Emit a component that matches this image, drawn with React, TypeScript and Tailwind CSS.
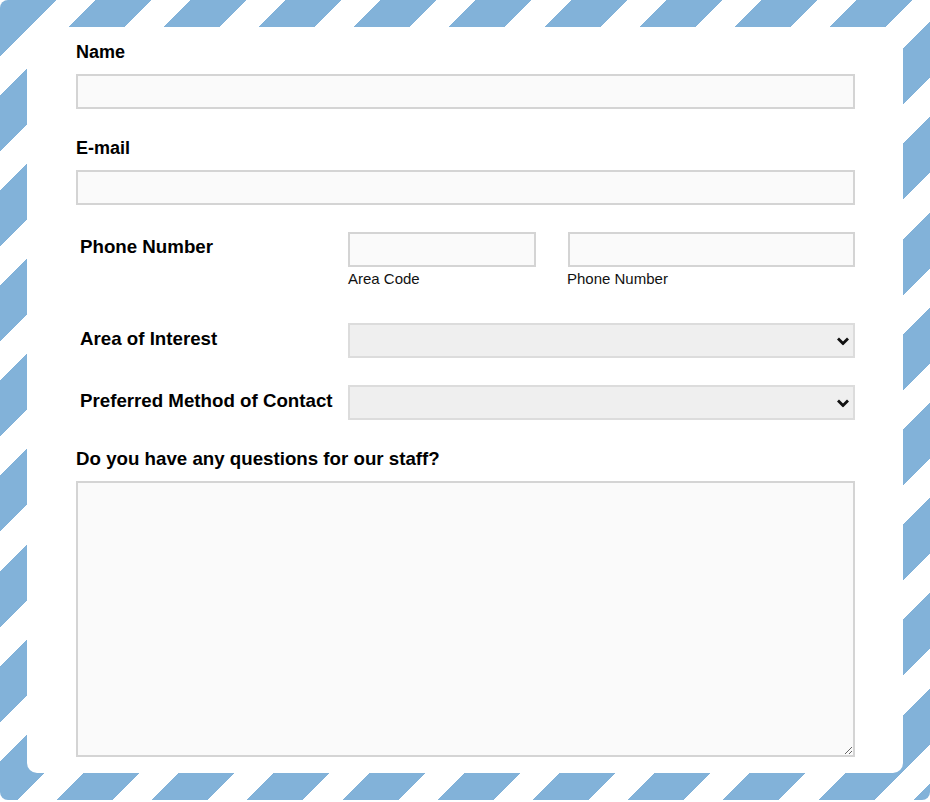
import React from "react";

function Chevron() {
  return (
    <svg
      className="pointer-events-none absolute right-[5px] top-1/2 -translate-y-1/2"
      width="14"
      height="9"
      viewBox="0 0 14 9"
      fill="none"
    >
      <path d="M2 2 L7 7 L12 2" stroke="#111" strokeWidth="2.8" strokeLinecap="butt" strokeLinejoin="miter" />
    </svg>
  );
}

function Select() {
  return (
    <div className="relative flex-1">
      <select className="block h-[35px] w-full appearance-none border-2 border-[#dcdcdc] bg-[#efefef] outline-none">
        <option></option>
      </select>
      <Chevron />
    </div>
  );
}

export default function App() {
  return (
    <div className="font-['Liberation_Sans',Arial,sans-serif] text-black bg-white">
      <div className="h-[800px] w-[930px] rounded-[8px] bg-white bg-[image:repeating-linear-gradient(135deg,#82b2d9_0px,#82b2d9_39.6px,#ffffff_39.6px,#ffffff_67.3px)] p-[27px]">
        <div className="flex h-[746px] flex-col rounded-[10px] bg-white pl-[49px] pr-[48px] pt-[15px]">
          <label className="text-[18px] font-bold leading-[21px]">Name</label>
          <input className="mt-[11px] h-[35px] w-full border-2 border-[#d4d4d4] bg-[#fafafa] outline-none" />

          <label className="mt-[29px] text-[18px] font-bold leading-[21px]">E-mail</label>
          <input className="mt-[11px] h-[35px] w-full border-2 border-[#d4d4d4] bg-[#fafafa] outline-none" />

          <div className="mt-[27px] flex">
            <div className="w-[272px] pl-[4px] pt-[4px] text-[18.72px] font-bold leading-[22px]">Phone Number</div>
            <div className="flex flex-1 gap-[32px]">
              <div className="flex w-[188px] flex-col">
                <input className="h-[35px] w-full border-2 border-[#d4d4d4] bg-[#fafafa] outline-none" />
                <span className="mt-[3px] text-[15px] leading-[17px] text-[#111]">Area Code</span>
              </div>
              <div className="flex flex-1 flex-col">
                <input className="h-[35px] w-full border-2 border-[#d4d4d4] bg-[#fafafa] outline-none" />
                <span className="mt-[3px] -ml-[1px] text-[15px] leading-[17px] text-[#111]">Phone Number</span>
              </div>
            </div>
          </div>

          <div className="mt-[36px] flex">
            <div className="w-[272px] pl-[4px] pt-[5px] text-[18.72px] font-bold leading-[22px]">Area of Interest</div>
            <Select />
          </div>

          <div className="mt-[27px] flex">
            <div className="w-[272px] pl-[4px] pt-[5px] text-[18.72px] font-bold leading-[22px] whitespace-nowrap">
              Preferred Method of Contact
            </div>
            <Select />
          </div>

          <label className="mt-[28px] text-[18.72px] font-bold leading-[22px]">
            Do you have any questions for our staff?
          </label>
          <textarea className="mt-[11px] h-[276px] w-full border-2 border-[#d4d4d4] bg-[#fafafa] outline-none" />
        </div>
      </div>
    </div>
  );
}
